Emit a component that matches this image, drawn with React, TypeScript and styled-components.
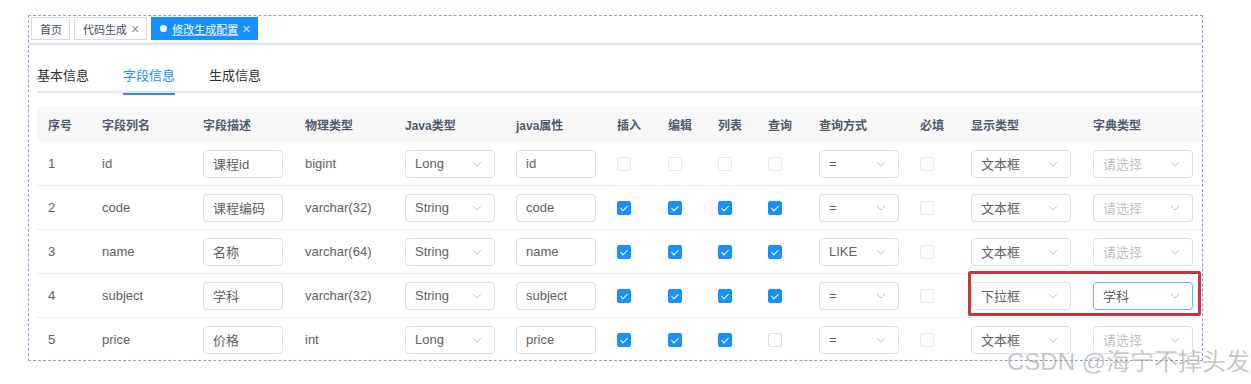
import React from "react";
import styled, { createGlobalStyle, css } from "styled-components";

const Global = createGlobalStyle`
  html, body { margin: 0; padding: 0; background: #fff; }
  body { font-family: "Liberation Sans", "Noto Sans CJK SC", sans-serif; width: 1251px; height: 384px; overflow: hidden; position: relative; }
  * { box-sizing: border-box; }
`;

const Frame = styled.div`
  margin: 15px 0 0 28px;
  width: 1175px;
  height: 346px;
  border: 1px dashed #7fa6da;
  overflow: hidden;
`;

const TagsBar = styled.div`
  height: 28px;
  padding: 1px 0 0 2px;
  display: flex;
  gap: 4px;
  border-bottom: 1px solid #d8dce5;
  box-shadow: 0 1px 2px rgba(0, 21, 41, 0.12);
`;

const Tag = styled.div<{ $active?: boolean }>`
  height: 23px;
  display: flex;
  align-items: center;
  gap: 4px;
  padding: 0 7px 0 8px;
  font-size: 11px;
  color: #495060;
  border: 1px solid #d8dce5;
  background: #fff;
  ${(p) =>
    p.$active &&
    css`
      background: #1890ff;
      border-color: #1890ff;
      color: #fff;
    `}
`;

const Dot = styled.span`
  width: 7px;
  height: 7px;
  border-radius: 50%;
  background: #fff;
  margin-right: 1px;
`;

const TagText = styled.span<{ $underline?: boolean }>`
  text-decoration: ${(p) => (p.$underline ? "underline" : "none")};
  text-decoration-color: rgba(255, 255, 255, 0.6);
`;

const Close = styled.span<{ $light?: boolean }>`
  font-size: 14px;
  line-height: 1;
  color: ${(p) => (p.$light ? "rgba(255,255,255,0.8)" : "#8a8f99")};
`;

const Content = styled.div`
  padding-left: 8px;
`;

const TabsHeader = styled.div`
  margin-top: 17px;
  display: flex;
  border-bottom: 2px solid #e4e7ed;
  height: 32px;
`;

const TabItem = styled.div<{ $active?: boolean; $first?: boolean }>`
  position: relative;
  height: 32px;
  line-height: 30px;
  padding: 0 17px;
  padding-left: ${(p) => (p.$first ? "0" : "17px")};
  font-size: 13px;
  color: ${(p) => (p.$active ? "#1890ff" : "#303133")};
  ${(p) =>
    p.$active &&
    css`
      &::after {
        content: "";
        position: absolute;
        left: 17px;
        right: 17px;
        bottom: -2px;
        height: 2px;
        background: #1890ff;
      }
    `}
`;

const Table = styled.div`
  margin-top: 14px;
  width: 1165px;
`;

const cols = "54px 101px 102px 100px 111px 101px 51px 50px 50px 51px 101px 51px 122px 120px";

const HeadRow = styled.div`
  display: grid;
  grid-template-columns: ${cols};
  height: 35px;
  background: #f8f8f9;
  align-items: center;
`;

const HeadCell = styled.div`
  padding-left: 11px;
  font-size: 12px;
  font-weight: bold;
  color: #515a6e;
  white-space: nowrap;
`;

const Row = styled.div`
  position: relative;
  display: grid;
  grid-template-columns: ${cols};
  height: 44px;
  align-items: center;
  border-bottom: 1px solid #ebeef5;
`;

const Cell = styled.div`
  padding-left: 11px;
  font-size: 13px;
  color: #606266;
  white-space: nowrap;
  display: flex;
  align-items: center;
`;

const Input = styled.div<{ $w: number }>`
  width: ${(p) => p.$w}px;
  height: 28px;
  border: 1px solid #dcdfe6;
  border-radius: 4px;
  padding-left: 9px;
  display: flex;
  align-items: center;
  font-size: 13px;
  color: #606266;
`;

const Select = styled.div<{ $w: number; $focus?: boolean; $placeholder?: boolean }>`
  width: ${(p) => p.$w}px;
  height: 28px;
  border: 1px solid ${(p) => (p.$focus ? "#6fb2f7" : "#dcdfe6")};
  border-radius: 4px;
  padding: 0 12px 0 9px;
  display: flex;
  align-items: center;
  justify-content: space-between;
  font-size: 13px;
  color: ${(p) => (p.$placeholder ? "#c0c4cc" : "#606266")};
`;

const Check = styled.span<{ $on?: boolean; $light?: boolean }>`
  position: relative;
  width: 14px;
  height: 14px;
  border-radius: 2px;
  border: 1px solid ${(p) => (p.$on ? "#1890ff" : p.$light ? "#e8eaee" : "#dcdfe6")};
  background: ${(p) => (p.$on ? "#1890ff" : "#fff")};
  ${(p) =>
    p.$on &&
    css`
      &::after {
        content: "";
        position: absolute;
        left: 4px;
        top: 2px;
        width: 3px;
        height: 6px;
        border: 1px solid #fff;
        border-left: 0;
        border-top: 0;
        transform: rotate(45deg);
      }
    `}
`;

const Highlight = styled.div`
  position: absolute;
  left: 931px;
  top: -3px;
  width: 233px;
  height: 45px;
  border: 3px solid #c8363b;
  border-radius: 2px;
  pointer-events: none;
`;

const Watermark = styled.div`
  position: absolute;
  left: 1007px;
  top: 342px;
  font-size: 24px;
  color: rgba(140, 140, 140, 0.55);
  white-space: nowrap;
  font-family: "Liberation Sans", "Noto Sans CJK SC", sans-serif;
  -webkit-text-stroke: 0.3px rgba(255, 255, 255, 0.6);
`;

const Chevron = () => (
  <svg width="10" height="6" viewBox="0 0 10 6">
    <polyline points="1,1 5,5 9,1" fill="none" stroke="#c0c4cc" strokeWidth="1" />
  </svg>
);

type RowData = {
  no: number;
  name: string;
  desc: string;
  type: string;
  jt: string;
  jp: string;
  checks: boolean[];
  query: string;
  show: string;
  dict: string;
  dictSet?: boolean;
  light?: boolean;
  mark?: boolean;
};

const rows: RowData[] = [
  { no: 1, name: "id", desc: "课程id", type: "bigint", jt: "Long", jp: "id", checks: [false, false, false, false], query: "=", show: "文本框", dict: "请选择", light: true },
  { no: 2, name: "code", desc: "课程编码", type: "varchar(32)", jt: "String", jp: "code", checks: [true, true, true, true], query: "=", show: "文本框", dict: "请选择" },
  { no: 3, name: "name", desc: "名称", type: "varchar(64)", jt: "String", jp: "name", checks: [true, true, true, true], query: "LIKE", show: "文本框", dict: "请选择" },
  { no: 4, name: "subject", desc: "学科", type: "varchar(32)", jt: "String", jp: "subject", checks: [true, true, true, true], query: "=", show: "下拉框", dict: "学科", dictSet: true, mark: true },
  { no: 5, name: "price", desc: "价格", type: "int", jt: "Long", jp: "price", checks: [true, true, true, false], query: "=", show: "文本框", dict: "请选择" },
];

const heads = ["序号", "字段列名", "字段描述", "物理类型", "Java类型", "java属性", "插入", "编辑", "列表", "查询", "查询方式", "必填", "显示类型", "字典类型"];

export default function App() {
  return (
    <>
      <Global />
      <Frame>
        <TagsBar>
          <Tag>
            <TagText>首页</TagText>
          </Tag>
          <Tag>
            <TagText>代码生成</TagText>
            <Close>×</Close>
          </Tag>
          <Tag $active>
            <Dot />
            <TagText $underline>修改生成配置</TagText>
            <Close $light>×</Close>
          </Tag>
        </TagsBar>
        <Content>
          <TabsHeader>
            <TabItem $first>基本信息</TabItem>
            <TabItem $active>字段信息</TabItem>
            <TabItem>生成信息</TabItem>
          </TabsHeader>
          <Table>
            <HeadRow>
              {heads.map((h) => (
                <HeadCell key={h}>{h}</HeadCell>
              ))}
            </HeadRow>
            {rows.map((r) => (
              <Row key={r.no}>
                <Cell>{r.no}</Cell>
                <Cell>{r.name}</Cell>
                <Cell>
                  <Input $w={80}>{r.desc}</Input>
                </Cell>
                <Cell>{r.type}</Cell>
                <Cell>
                  <Select $w={90}>
                    <span>{r.jt}</span>
                    <Chevron />
                  </Select>
                </Cell>
                <Cell>
                  <Input $w={80}>{r.jp}</Input>
                </Cell>
                {r.checks.map((c, i) => (
                  <Cell key={i}>
                    <Check $on={c} $light={r.light} />
                  </Cell>
                ))}
                <Cell>
                  <Select $w={80}>
                    <span>{r.query}</span>
                    <Chevron />
                  </Select>
                </Cell>
                <Cell>
                  <Check $light />
                </Cell>
                <Cell>
                  <Select $w={100}>
                    <span>{r.show}</span>
                    <Chevron />
                  </Select>
                </Cell>
                <Cell>
                  <Select $w={100} $focus={r.dictSet} $placeholder={!r.dictSet}>
                    <span>{r.dict}</span>
                    <Chevron />
                  </Select>
                </Cell>
                {r.mark && <Highlight />}
              </Row>
            ))}
          </Table>
        </Content>
      </Frame>
      <Watermark>CSDN @海宁不掉头发</Watermark>
    </>
  );
}
